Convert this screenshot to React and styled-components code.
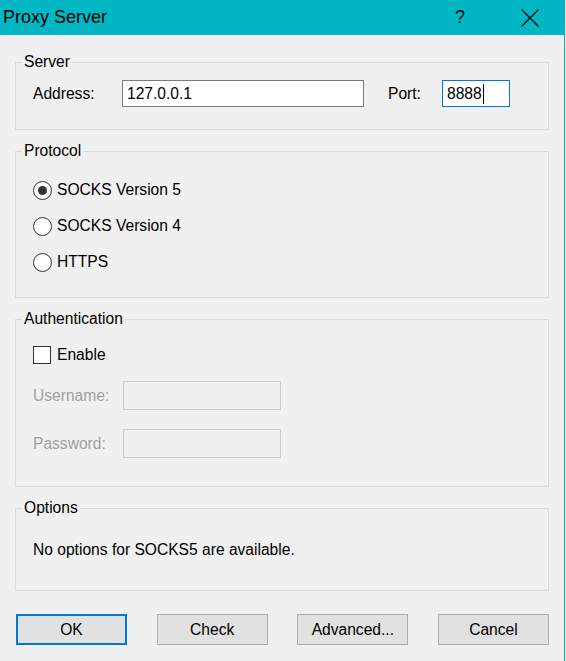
import React from 'react';
import styled, { createGlobalStyle } from 'styled-components';

const GlobalStyle = createGlobalStyle`
  html, body {
    margin: 0;
    padding: 0;
    background: #f0f0f0;
  }
  body {
    font-family: 'Liberation Sans', Arial, sans-serif;
    font-size: 15.6px;
    color: #000;
  }
`;

export default function App() {
  return (
    <>
      <GlobalStyle />
      <Window>
        <TitleBar>
          <Title>Proxy Server</Title>
          <HelpGlyph>?</HelpGlyph>
          <CloseButton>
            <svg width='18' height='18' viewBox='0 0 18 18'>
              <path d='M0.5 0.5 L17.5 17.5 M17.5 0.5 L0.5 17.5' stroke='#000' strokeWidth='1.1' />
            </svg>
          </CloseButton>
        </TitleBar>
        <Body>
          <Group>
            <Legend>Server</Legend>
            <GroupBody $pad='9px 0 22px 17px'>
              <Row>
                <Label $w={89}>Address:</Label>
                <TextBox $w={242}>127.0.0.1</TextBox>
                <Label $w={54} style={{ marginLeft: 24 }}>Port:</Label>
                <TextBox $w={68} $focused>
                  8888
                  <Caret />
                </TextBox>
              </Row>
            </GroupBody>
          </Group>

          <Group>
            <Legend>Protocol</Legend>
            <GroupBody $pad='18px 0 23px 17px'>
              <Stack $gap={12}>
                <Choice>
                  <Radio $checked />
                  SOCKS Version 5
                </Choice>
                <Choice>
                  <Radio />
                  SOCKS Version 4
                </Choice>
                <Choice>
                  <Radio />
                  HTTPS
                </Choice>
              </Stack>
            </GroupBody>
          </Group>

          <Group>
            <Legend>Authentication</Legend>
            <GroupBody $pad='15px 0 28px 17px'>
              <Choice>
                <Check />
                Enable
              </Choice>
              <Stack $gap={19} style={{ marginTop: 14 }}>
                <Row>
                  <Label $w={90} $disabled>Username:</Label>
                  <DisabledBox />
                </Row>
                <Row>
                  <Label $w={90} $disabled>Password:</Label>
                  <DisabledBox />
                </Row>
              </Stack>
            </GroupBody>
          </Group>

          <Group>
            <Legend>Options</Legend>
            <GroupBody $pad='24px 0 31px 17px'>
              <Note>No options for SOCKS5 are available.</Note>
            </GroupBody>
          </Group>

          <Buttons>
            <Button $default>OK</Button>
            <Button>Check</Button>
            <Button>Advanced...</Button>
            <Button>Cancel</Button>
          </Buttons>
        </Body>
      </Window>
    </>
  );
}

const Window = styled.div`
  width: 564px;
  height: 661px;
  border-right: 1px solid #00b7c3;
  background: #f0f0f0;
`;

const TitleBar = styled.div`
  height: 35px;
  background: #00b7c3;
  display: flex;
  align-items: center;
  padding-left: 3px;
`;

const Title = styled.div`
  font-size: 18px;
  flex: 1;
`;

const HelpGlyph = styled.div`
  font-size: 18px;
  width: 20px;
  text-align: center;
  margin-right: 51px;
`;

const CloseButton = styled.div`
  width: 18px;
  height: 18px;
  margin-right: 25px;
  display: flex;
`;

const Body = styled.div`
  padding: 18px 15px 0 15px;
  display: flex;
  flex-direction: column;
  gap: 12px;
`;

const Group = styled.fieldset`
  margin: 0;
  padding: 0;
  min-width: 0;
  border: 1px solid #dcdcdc;
`;

const Legend = styled.legend`
  margin-left: 6px;
  padding: 0 2px;
  line-height: 18px;
`;

const GroupBody = styled.div`
  padding: ${(p) => p.$pad};
  display: flex;
  flex-direction: column;
`;

const Row = styled.div`
  display: flex;
  align-items: center;
`;

const Stack = styled.div`
  display: flex;
  flex-direction: column;
  gap: ${(p) => p.$gap}px;
`;

const Label = styled.div`
  width: ${(p) => p.$w}px;
  padding-top: 1px;
  color: ${(p) => (p.$disabled ? '#a0a0a0' : '#000')};
`;

const TextBox = styled.div`
  box-sizing: border-box;
  width: ${(p) => p.$w}px;
  height: 27px;
  padding: 1px 4px 0;
  display: flex;
  align-items: center;
  background: #fff;
  border: 1px solid ${(p) => (p.$focused ? '#0078d7' : '#7a7a7a')};
`;

const Caret = styled.span`
  width: 1px;
  height: 20px;
  background: #000;
  margin-left: 1px;
`;

const DisabledBox = styled.div`
  box-sizing: border-box;
  width: 158px;
  height: 29px;
  background: #f0f0f0;
  border: 1px solid #cccccc;
`;

const Choice = styled.div`
  display: flex;
  align-items: center;
  gap: 5px;
  height: 24px;
`;

const Radio = styled.span`
  box-sizing: border-box;
  width: 19px;
  height: 19px;
  border-radius: 50%;
  border: 1px solid #333;
  background: #fff;
  display: flex;
  align-items: center;
  justify-content: center;

  &::after {
    content: '';
    display: ${(p) => (p.$checked ? 'block' : 'none')};
    width: 9px;
    height: 9px;
    border-radius: 50%;
    background: #333;
  }
`;

const Check = styled.span`
  box-sizing: border-box;
  width: 18px;
  height: 18px;
  border: 1px solid #333;
  background: #fff;
  margin-right: 1px;
`;

const Note = styled.div`
  line-height: 18px;
`;

const Buttons = styled.div`
  margin-top: 11px;
  padding-left: 1px;
  display: flex;
  justify-content: space-between;
`;

const Button = styled.button`
  box-sizing: border-box;
  width: 111px;
  height: 31px;
  font-family: inherit;
  font-size: 15.6px;
  color: #000;
  background: #e1e1e1;
  border: ${(p) => (p.$default ? '2px solid #0078d7' : '1px solid #adadad')};
  padding: 0;
`;
